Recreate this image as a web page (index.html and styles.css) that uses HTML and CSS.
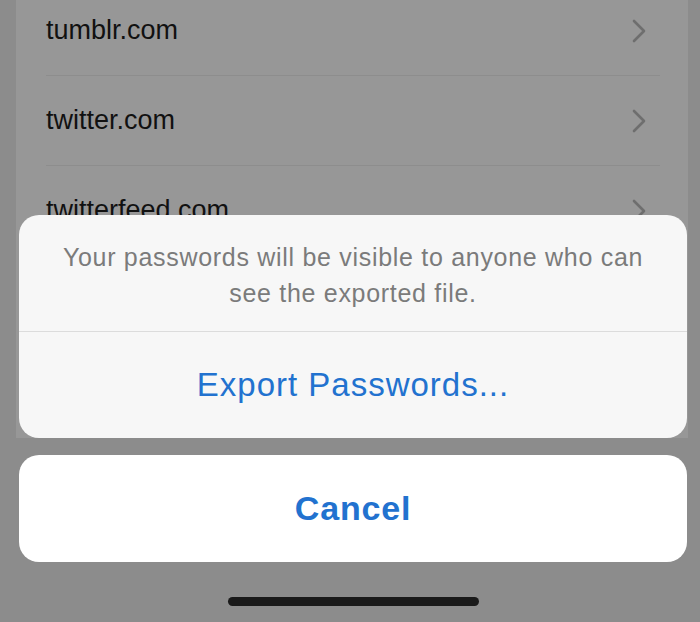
FILE: index.html
```html
<!doctype html>
<html>

<head>
	<link rel="stylesheet" href="styles.css">
</head>

<body>
	<div class="screen">
		<div class="list">
			<div class="row">
				<div class="row-inner">
					<span class="site">tumblr.com</span>
					<svg class="chevron" width="14" height="24" viewBox="0 0 14 24"><polyline points="2,2 12,12 2,22" /></svg>
				</div>
			</div>
			<div class="row">
				<div class="row-inner">
					<span class="site">twitter.com</span>
					<svg class="chevron" width="14" height="24" viewBox="0 0 14 24"><polyline points="2,2 12,12 2,22" /></svg>
				</div>
			</div>
			<div class="row">
				<div class="row-inner">
					<span class="site">twitterfeed.com</span>
					<svg class="chevron" width="14" height="24" viewBox="0 0 14 24"><polyline points="2,2 12,12 2,22" /></svg>
				</div>
			</div>
		</div>

		<div class="sheet">
			<div class="alert">
				<p class="message">Your passwords will be visible to anyone who can see the exported file.</p>
				<button type="button" class="action">Export Passwords...</button>
			</div>
			<button type="button" class="cancel">Cancel</button>
			<div class="home-bar"></div>
		</div>
	</div>
</body>

</html>
```

FILE: styles.css
```css
body {
	margin: 0;
	background: #8c8c8c;
	font-family: "Liberation Sans", Arial, Helvetica, sans-serif;
}

.screen {
	position: relative;
	width: 700px;
	height: 622px;
	overflow: hidden;
}

.list {
	margin: 0 12px 0 16px;
	height: 438px;
	background: #979797;
	overflow: hidden;
}

.row {
	height: 90px;
	padding-left: 30px;
}

.row:first-child {
	margin-top: -14px;
}

.row-inner {
	height: 89px;
	margin-right: 28px;
	padding-right: 14px;
	display: flex;
	align-items: center;
	justify-content: space-between;
	border-bottom: 1px solid #8d8d8d;
}

.site {
	font-size: 27px;
	color: #111;
}

.chevron polyline {
	fill: none;
	stroke: #6e6e6e;
	stroke-width: 2.6;
	stroke-linecap: round;
	stroke-linejoin: round;
}

/* action sheet lies over the list */
.sheet {
	position: absolute;
	top: 215px;
	left: 19px;
	width: 668px;
	display: flex;
	flex-direction: column;
	align-items: center;
}

.alert {
	width: 100%;
	background: #f7f7f7;
	border-radius: 20px;
	overflow: hidden;
}

.message {
	margin: 0;
	padding: 24px 30px 20px;
	font-size: 25px;
	line-height: 36px;
	letter-spacing: 0.7px;
	color: #7b7b7b;
	text-align: center;
	border-bottom: 1px solid #dcdcdc;
}

.action,
.cancel {
	display: block;
	width: 100%;
	border: none;
	margin: 0;
	padding: 0;
	font-family: inherit;
	color: #2272cf;
	cursor: pointer;
}

.action {
	height: 106px;
	background: transparent;
	font-size: 33px;
	letter-spacing: 1px;
}

.cancel {
	margin-top: 17px;
	height: 107px;
	background: #fff;
	border-radius: 20px;
	font-size: 34px;
	font-weight: bold;
	letter-spacing: 0.8px;
}

.home-bar {
	margin-top: 35px;
	width: 251px;
	height: 9px;
	border-radius: 5px;
	background: #1a1a1a;
}
```
